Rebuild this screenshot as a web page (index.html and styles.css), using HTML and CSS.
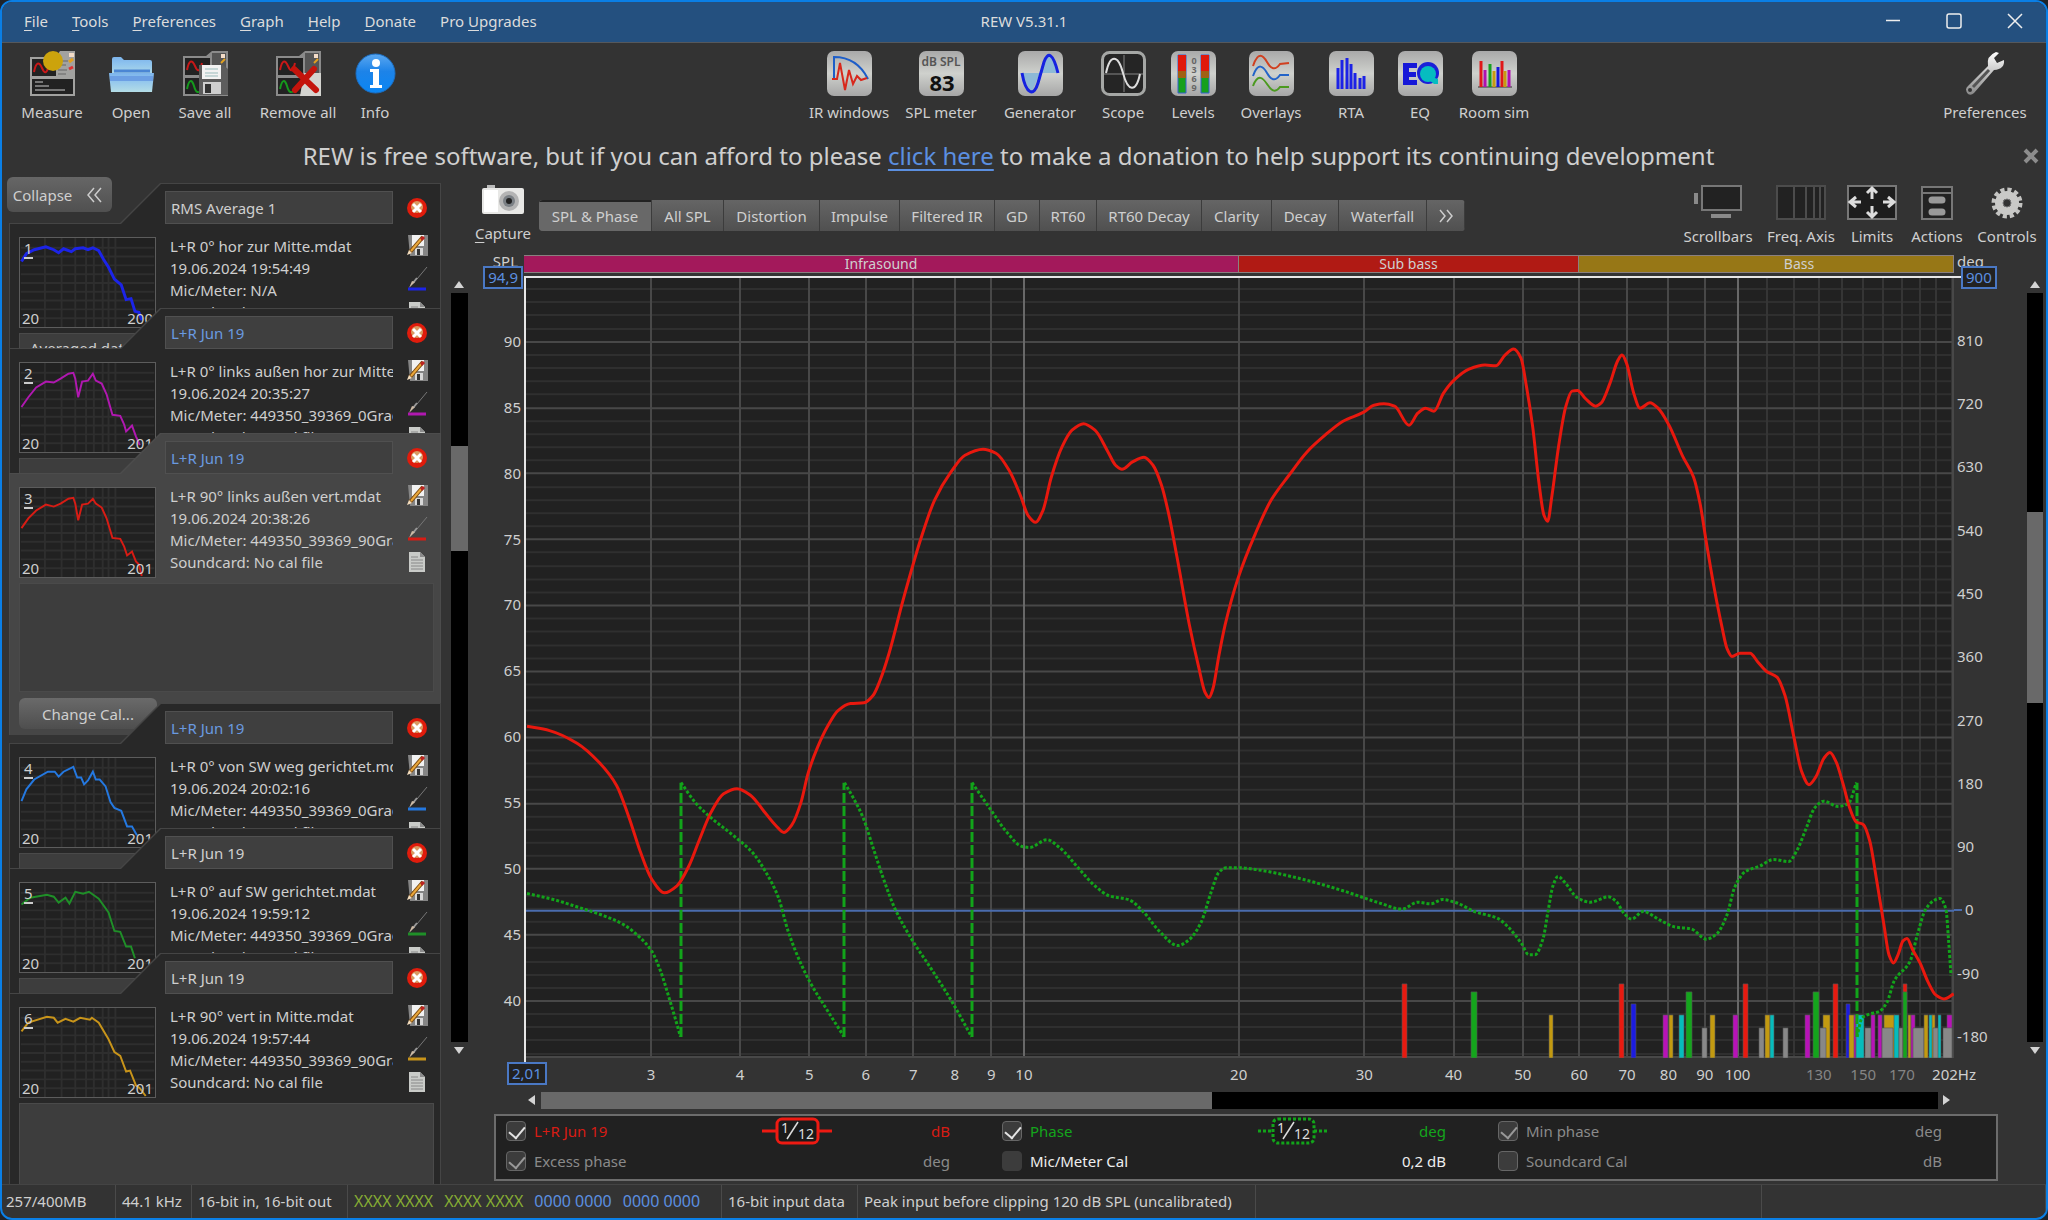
FILE: index.html
```html
<!DOCTYPE html>
<html lang="en">
<head>
<meta charset="utf-8">
<title>REW V5.31.1</title>
<link rel="stylesheet" href="styles.css">
</head>
<body>
<svg class="defs" aria-hidden="true">
  <defs>
    <linearGradient id="tile" x1="0" y1="0" x2="0" y2="1"><stop offset="0" stop-color="#a9a9a9"/><stop offset=".5" stop-color="#cfd1cd"/><stop offset="1" stop-color="#a6a6a6"/></linearGradient>
    <linearGradient id="metal" x1="0" y1="0" x2="0" y2="1"><stop offset="0" stop-color="#fff"/><stop offset="1" stop-color="#888"/></linearGradient>
    <linearGradient id="folder" x1="0" y1="0" x2="0" y2="1"><stop offset="0" stop-color="#7db4ec"/><stop offset=".35" stop-color="#8ec3ee"/><stop offset="1" stop-color="#b4dde6"/></linearGradient>
    <linearGradient id="blue" x1="0" y1="0" x2="0" y2="1"><stop offset="0" stop-color="#5aa7f0"/><stop offset=".45" stop-color="#1d83e8"/><stop offset="1" stop-color="#0a86f4"/></linearGradient>
    <symbol id="sheet" viewBox="0 0 45 45">
      <path d="M0 5H23L29 0H45V45H0Z" fill="#8b8b8b"/><path d="M2 7H27V24H2Z" fill="#222"/><path d="M2 27H27V43H2Z" fill="#222"/>
      <path d="M29 2H43V43H29Z" fill="#555"/><path d="M38 3h4v4h-4z" fill="#f3dcc8"/><path d="M38 12l4-4" stroke="#e0a020" stroke-width="2"/>
      <path d="M4 19C6 9 9 8 12 15S17 20 19 12" fill="none" stroke="#c81818" stroke-width="2"/>
      <path d="M4 38C6 28 9 28 11 35S15 42 18 40" fill="none" stroke="#159a1c" stroke-width="2"/>
    </symbol>
    <symbol id="delete" viewBox="0 0 22 22"><circle cx="11" cy="11" r="10" fill="#e01c0c"/><circle cx="11" cy="10" r="6" fill="#d99a62"/><path d="M7 7L15 15M15 7L7 15" stroke="#fff" stroke-width="3" fill="none"/></symbol>
    <symbol id="floppy" viewBox="0 0 21 21"><path d="M1 0H21V21H3Z" fill="#858585"/><path d="M5 0H17V11H5Z" fill="#f2f2f2"/><path d="M8 13H16V20H8Z" fill="#d8d8d8"/><path d="M10 14h3v6h-3z" fill="#333"/><path d="M16 2L3 17" stroke="#7a4a10" stroke-width="4"/><path d="M15 3L4 16" stroke="#e9a63a" stroke-width="2"/><path d="M0 20L2 15L5 18Z" fill="#f4ddbd"/><path d="M13 3L16 1L18 3L15 6Z" fill="#b22"/></symbol>
    <symbol id="brush" viewBox="0 0 21 25"><path d="M20 1L10 13" stroke="#777" stroke-width="1"/><path d="M10 12L6 17" stroke="#999" stroke-width="2"/><path d="M8 16L2 22L5 15Z" fill="#cbb9a5"/><path d="M1 23H19" stroke="currentColor" stroke-width="3"/></symbol>
    <symbol id="doc" viewBox="0 0 21 21"><path d="M2 1H13L18 6V21H2Z" fill="#c9cbc8"/><path d="M13 1V6H18Z" fill="#8b8b8b"/><path d="M4 6H11M4 9H16M4 12H16M4 15H16M4 18H16" stroke="#888" stroke-width="1"/></symbol>
    <symbol id="thumbgrid" viewBox="0 0 137 91"><path d="M25 0V91M42 0V91M56 0V91M67 0V91M75 0V91M84 0V91M90 0V91M97 0V91M0 10H137M0 19H137M0 28H137M0 37H137M0 46H137M0 55H137M0 64H137M0 73H137M0 82H137" stroke="#2e2e2e" stroke-width="2" fill="none"/></symbol>
  </defs>
</svg>

<div class="window">
  <header class="titlebar">
    <nav class="menu">
      <a href="#"><u>F</u>ile</a><a href="#"><u>T</u>ools</a><a href="#"><u>P</u>references</a><a href="#"><u>G</u>raph</a><a href="#"><u>H</u>elp</a><a href="#"><u>D</u>onate</a><a href="#">Pro <u>U</u>pgrades</a>
    </nav>
    <h1 class="app-title">REW V5.31.1</h1>
    <div class="win-buttons">
      <button aria-label="Minimise"><svg width="16" height="16"><path d="M1 7.500H15" stroke="#eee" stroke-width="1.500"/></svg></button>
      <button aria-label="Maximise"><svg width="16" height="16"><rect x="1" y="1" width="14" height="14" rx="2" fill="none" stroke="#eee" stroke-width="1.500"/></svg></button>
      <button aria-label="Close"><svg width="16" height="16"><path d="M1 1L15 15M15 1L1 15" stroke="#eee" stroke-width="1.500"/></svg></button>
    </div>
  </header>

  <div class="toolbar">
    <div class="tools tools-file">
      <button><svg width="45" height="45"><path d="M0 6H26L30 0H45V45H0Z" fill="#a2a2a0"/><path d="M2 8H26V25H2Z" fill="#222"/><path d="M2 28H43V43H2Z" fill="#222"/><path d="M4 21C6 11 9 10 12 17S17 22 19 14" fill="none" stroke="#c81818" stroke-width="2"/><path d="M5 31h8M5 35h14M5 39h30" stroke="#ccc" stroke-width="1"/><path d="M28 10H38M28 14H36M28 19H37M28 23H36" stroke="#666" stroke-width="1"/><path d="M39 2h5v4h-5z" fill="#f3dcc8"/><path d="M39 11l4-3" stroke="#e0a020" stroke-width="3"/><path d="M39 18l4-2" stroke="#d33" stroke-width="3"/><circle cx="23" cy="10" r="10" fill="#cca30c"/></svg>Measure</button>
      <button><svg width="45" height="45"><path d="M3 8Q3 6 5 6H12L15 9H41Q43 9 43 11V25H3Z" fill="url(#folder)"/><path d="M5 20H41" stroke="#4b86d4" stroke-width="3"/><path d="M0 22H45L43 41H2Z" fill="url(#folder)"/><path d="M1 25H44L44 30H1Z" fill="#6c9fe4"/></svg>Open</button>
      <button><svg width="45" height="45"><use href="#sheet"/><path d="M16 14H40L45 18V44H16Z" fill="#5d5d5d"/><path d="M19 14H38V28H19Z" fill="#f2f2f2"/><path d="M22 18H35M22 22H35M22 25H35" stroke="#9bb"/><path d="M20 31H38V43H20Z" fill="#cfcfcf"/><path d="M22 33h6v9h-6z" fill="#333"/></svg>Save all</button>
      <button><svg width="45" height="45"><use href="#sheet"/><path d="M28 22H45V45H24Z" fill="#d4d4d0"/><path d="M18 18L40 39M38 18L19 39" stroke="#c4140c" stroke-width="6" stroke-linecap="round"/></svg>Remove all</button>
      <button><svg width="45" height="45"><circle cx="22.500" cy="22.500" r="19.500" fill="url(#blue)" stroke="#1b6fc4"/><circle cx="23" cy="12" r="4" fill="#fff"/><path d="M17 18H26V34H29V37H17V34H20V21H17Z" fill="#fff"/></svg>Info</button>
    </div>
    <div class="tools tools-main">
      <button><svg width="45" height="45"><rect width="45" height="45" rx="7" fill="url(#tile)"/><path d="M7 28V6C22 6 34 14 41 28" fill="none" stroke="#1e5ec8" stroke-width="2"/><path d="M5 28H10L13 12L18 39L22 19L26 33L30 25L34 29L40 27" fill="none" stroke="#d8281c" stroke-width="2"/></svg>IR windows</button>
      <button><svg width="45" height="45"><rect width="45" height="45" rx="7" fill="url(#tile)"/><text x="22" y="15" class="icon-small">dB SPL</text><text x="23" y="40" class="icon-big">83</text></svg>SPL meter</button>
      <button><svg width="45" height="45"><rect width="45" height="45" rx="7" fill="url(#tile)"/><path d="M4 22H22L14 40Q10 38 4 22ZM23 22H40L32 4Q28 4 23 22Z" fill="#8db9d6"/><path d="M4 22C8 44 16 46 20 32L26 11C30 0 35 2 40 22" fill="none" stroke="#1522e0" stroke-width="3"/></svg>Generator</button>
      <button><svg width="45" height="45"><rect x="1.500" y="1.500" width="42" height="42" rx="7" fill="#252525" stroke="#a5a7a5" stroke-width="3"/><path d="M3 23H42M23 4V41" stroke="#555" stroke-width="2"/><path d="M5 22C9 3 17 3 22 22S35 42 39 23" fill="none" stroke="#ddd" stroke-width="2"/></svg>Scope</button>
      <button><svg width="45" height="45"><rect width="45" height="45" rx="7" fill="url(#tile)"/><g stroke="#3460d0"><path d="M7 4H15V42H7ZM30 4H38V42H30Z" fill="#16a01c"/></g><path d="M7 4H15V20H7ZM30 4H38V20H30Z" fill="#e0180c"/><path d="M7 20H15V27H7ZM30 20H38V27H30Z" fill="#a06014"/><g class="icon-scale"><text x="23" y="13">0</text><text x="23" y="22">3</text><text x="23" y="31">6</text><text x="23" y="40">9</text></g></svg>Levels</button>
      <button><svg width="45" height="45"><rect width="45" height="45" rx="7" fill="url(#tile)"/><g fill="none" stroke-width="2"><path d="M4 15C9 0 14 4 18 11S26 20 31 13T40 12" stroke="#d04020"/><path d="M4 25C9 11 14 15 18 22S26 31 31 24T40 24" stroke="#2464c8"/><path d="M4 35C9 22 14 27 18 33S26 43 31 36T40 36" stroke="#4c9a20"/></g></svg>Overlays</button>
      <button><svg width="45" height="45"><rect width="45" height="45" rx="7" fill="url(#tile)"/><path d="M9 38V17M13 38V9M18 38V7M22 38V13M26 38V22M31 38V27M35 38V25" stroke="#1c22e6" stroke-width="3"/></svg>RTA</button>
      <button><svg width="45" height="45"><rect width="45" height="45" rx="7" fill="url(#tile)"/><path d="M5 12H19V17H11V21H18V26H11V29H19V34H5Z" fill="#1618d8"/><circle cx="30" cy="22" r="11" fill="#1a20d8"/><circle cx="30" cy="23" r="8" fill="#06bcc0"/><path d="M34 26L40 28V33H36L31 29Z" fill="#06bcc0"/></svg>EQ</button>
      <button><svg width="45" height="45"><rect width="45" height="45" rx="7" fill="url(#tile)"/><path d="M6 36H40" stroke="#333"/><g stroke-width="3"><path d="M9 36V10M30 36V10" stroke="#e01818"/><path d="M13 36V19M37 36V19" stroke="#b010b0"/><path d="M18 36V13" stroke="#18a020"/><path d="M22 36V20M33 36V20" stroke="#c89a10"/><path d="M26 36V16" stroke="#1818d8"/></g></svg>Room sim</button>
    </div>
    <div class="tools tools-prefs">
      <button><svg width="45" height="45"><path d="M5 43Q1 38 5 35L25 15Q23 5 33 1L36 2L31 7L34 12L41 9Q42 18 31 19L11 42Q8 45 5 43Z" fill="url(#metal)"/><path d="M10 36L26 19" stroke="#555" stroke-width="3"/><circle cx="7" cy="39" r="2" fill="#333"/></svg>Preferences</button>
    </div>
  </div>

  <div class="banner">
    <p>REW is free software, but if you can afford to please <a href="#">click here</a> to make a donation to help support its continuing development</p>
    <button class="banner-close" aria-label="Close message"><svg width="16" height="16"><path d="M2 2L14 14M14 2L2 14" stroke="#8c8c8c" stroke-width="4"/></svg></button>
  </div>

  <main class="workspace">
    <aside class="sidebar">
      <button class="collapse">Collapse <svg width="16" height="16"><path d="M8 1L2 8L8 15M15 1L9 8L15 15" fill="none" stroke="#ccc" stroke-width="1.500"/></svg></button>

      <article class="card">
        <input class="name plain" aria-label="Measurement 1 name" value="RMS Average 1"><button class="icon-btn" aria-label="Remove 1"><svg width="22" height="22"><use href="#delete"/></svg></button>
        <div class="thumb"><svg viewBox="0 0 137 91"><use href="#thumbgrid"/><polyline class="trace blue wide" points="1,24 6,16 14,12 26,9 34,12 39,15 44,11 52,14 56,11 64,10 69,12 74,10 80,13 85,22 90,30 96,42 103,48 108,63 113,62 117,75 121,76 124,84"/></svg><b>1</b><i>20</i><em>200</em></div>
        <div class="info"><p>L+R 0° hor zur Mitte.mdat</p><p>19.06.2024 19:54:49</p><p>Mic/Meter: N/A</p><p>Soundcard: N/A</p></div>
        <div class="card-icons blue"><svg width="21" height="21"><use href="#floppy"/></svg><svg width="21" height="25"><use href="#brush"/></svg><svg width="21" height="21"><use href="#doc"/></svg></div>
        <textarea class="notes" aria-label="Notes 1">Averaged data</textarea>
      </article>

      <article class="card">
        <input class="name" aria-label="Measurement 2 name" value="L+R Jun 19"><button class="icon-btn" aria-label="Remove 2"><svg width="22" height="22"><use href="#delete"/></svg></button>
        <div class="thumb"><svg viewBox="0 0 137 91"><use href="#thumbgrid"/><polyline class="trace magenta" points="1,45 8,35 16,25 26,19 34,20 41,16 49,11 54,10 56,16 59,35 63,19 69,18 74,11 77,18 83,21 88,32 94,53 102,54 106,63 108,70 114,64 118,75 122,84"/></svg><b>2</b><i>20</i><em>201</em></div>
        <div class="info"><p>L+R 0° links außen hor zur Mitte.mdat</p><p>19.06.2024 20:35:27</p><p>Mic/Meter: 449350_39369_0Grad.txt</p><p>Soundcard: No cal file</p></div>
        <div class="card-icons magenta"><svg width="21" height="21"><use href="#floppy"/></svg><svg width="21" height="25"><use href="#brush"/></svg><svg width="21" height="21"><use href="#doc"/></svg></div>
        <textarea class="notes" aria-label="Notes 2"></textarea>
      </article>

      <article class="card active">
        <input class="name" aria-label="Measurement 3 name" value="L+R Jun 19"><button class="icon-btn" aria-label="Remove 3"><svg width="22" height="22"><use href="#delete"/></svg></button>
        <div class="thumb"><svg viewBox="0 0 137 91"><use href="#thumbgrid"/><polyline class="trace red" points="1,41 8,31 16,23 26,17 34,19 41,16 49,11 54,10 56,16 59,33 63,17 69,16 74,11 77,16 83,20 88,31 94,51 102,52 106,60 109,69 114,65 118,75 121,78 124,90"/></svg><b>3</b><i>20</i><em>201</em></div>
        <div class="info"><p>L+R 90° links außen vert.mdat</p><p>19.06.2024 20:38:26</p><p>Mic/Meter: 449350_39369_90Grad.txt</p><p>Soundcard: No cal file</p></div>
        <div class="card-icons red"><svg width="21" height="21"><use href="#floppy"/></svg><svg width="21" height="25"><use href="#brush"/></svg><svg width="21" height="21"><use href="#doc"/></svg></div>
        <textarea class="notes" aria-label="Notes 3"></textarea>
        <button class="change-cal">Change Cal...</button>
      </article>

      <article class="card">
        <input class="name" aria-label="Measurement 4 name" value="L+R Jun 19"><button class="icon-btn" aria-label="Remove 4"><svg width="22" height="22"><use href="#delete"/></svg></button>
        <div class="thumb"><svg viewBox="0 0 137 91"><use href="#thumbgrid"/><polyline class="trace azure" points="1,44 6,32 14,22 28,14 35,14 39,19 44,14 54,9 58,20 62,20 65,27 69,23 74,14 77,22 81,22 87,29 92,45 96,51 103,54 109,70 114,70 119,79"/></svg><b>4</b><i>20</i><em>201</em></div>
        <div class="info"><p>L+R 0° von SW weg gerichtet.mdat</p><p>19.06.2024 20:02:16</p><p>Mic/Meter: 449350_39369_0Grad.txt</p><p>Soundcard: No cal file</p></div>
        <div class="card-icons azure"><svg width="21" height="21"><use href="#floppy"/></svg><svg width="21" height="25"><use href="#brush"/></svg><svg width="21" height="21"><use href="#doc"/></svg></div>
        <textarea class="notes" aria-label="Notes 4"></textarea>
      </article>

      <article class="card">
        <input class="name plain" aria-label="Measurement 5 name" value="L+R Jun 19"><button class="icon-btn" aria-label="Remove 5"><svg width="22" height="22"><use href="#delete"/></svg></button>
        <div class="thumb"><svg viewBox="0 0 137 91"><use href="#thumbgrid"/><polyline class="trace green" points="1,22 10,15 27,12 34,14 39,20 46,15 50,21 56,9 64,11 70,9 80,16 90,30 96,49 102,50 108,65 113,65 117,77"/></svg><b>5</b><i>20</i><em>201</em></div>
        <div class="info"><p>L+R 0° auf SW gerichtet.mdat</p><p>19.06.2024 19:59:12</p><p>Mic/Meter: 449350_39369_0Grad.txt</p><p>Soundcard: No cal file</p></div>
        <div class="card-icons green"><svg width="21" height="21"><use href="#floppy"/></svg><svg width="21" height="25"><use href="#brush"/></svg><svg width="21" height="21"><use href="#doc"/></svg></div>
        <textarea class="notes" aria-label="Notes 5"></textarea>
      </article>

      <article class="card last">
        <input class="name plain" aria-label="Measurement 6 name" value="L+R Jun 19"><button class="icon-btn" aria-label="Remove 6"><svg width="22" height="22"><use href="#delete"/></svg></button>
        <div class="thumb"><svg viewBox="0 0 137 91"><use href="#thumbgrid"/><polyline class="trace amber" points="1,24 8,15 27,9 34,10 38,15 46,11 54,14 61,10 71,12 73,10 80,15 90,32 96,45 102,49 108,65 112,64 118,79 122,82 128,90"/></svg><b>6</b><i>20</i><em>201</em></div>
        <div class="info"><p>L+R 90° vert in Mitte.mdat</p><p>19.06.2024 19:57:44</p><p>Mic/Meter: 449350_39369_90Grad.txt</p><p>Soundcard: No cal file</p></div>
        <div class="card-icons amber"><svg width="21" height="21"><use href="#floppy"/></svg><svg width="21" height="25"><use href="#brush"/></svg><svg width="21" height="21"><use href="#doc"/></svg></div>
        <textarea class="notes" aria-label="Notes 6"></textarea>
      </article>
    </aside>

    <div class="scroll scroll-v scroll-list"><span class="arrow up"></span><div class="track"><div class="grip grip-list"></div></div><span class="arrow down"></span></div>

    <section class="graph">
      <div class="graph-head">
        <button class="capture"><svg width="42" height="30"><path d="M5 0H13V3H5Z" fill="#bbb"/><rect x="0" y="3" width="42" height="26" rx="2" fill="#e8e8e6"/><path d="M2 5H16V27H2Z" fill="#fff"/><circle cx="27" cy="16" r="10" fill="#b4b4b4"/><circle cx="27" cy="16" r="6" fill="#7b8085"/><circle cx="27" cy="16" r="3" fill="#222"/></svg><span><u>C</u>apture</span></button>
        <nav class="tabs">
          <button class="on">SPL &amp; Phase</button><button>All SPL</button><button>Distortion</button><button>Impulse</button><button>Filtered IR</button><button>GD</button><button>RT60</button><button>RT60 Decay</button><button>Clarity</button><button>Decay</button><button>Waterfall</button><button aria-label="More graphs"><svg width="16" height="14"><path d="M2 1L7 7L2 13M9 1L14 7L9 13" fill="none" stroke="#ccc" stroke-width="1.500"/></svg></button>
        </nav>
        <div class="view-tools">
          <button><svg width="50" height="35"><path d="M1 8H5V19H1Z M18 29H38V33H18Z" fill="#8a8a8a"/><rect x="9" y="1" width="39" height="24" fill="#222" stroke="#777" stroke-width="2"/></svg>Scrollbars</button>
          <button><svg width="50" height="35"><rect x="1" y="1" width="48" height="33" fill="#222" stroke="#4c4c4c" stroke-width="2"/><path d="M18 1V34M30 1V34M38 1V34M44 1V34" stroke="#4c4c4c" stroke-width="2"/></svg>Freq. Axis</button>
          <button><svg width="50" height="35"><rect x="1" y="1" width="48" height="33" fill="#1d1d1d" stroke="#777" stroke-width="2"/><path d="M25 14V4M20 8L25 3L30 8M25 21V31M20 27L25 32L30 27M14 17H3M9 12L3 17L9 22M36 17H47M41 12L47 17L41 22" fill="none" stroke="#ddd" stroke-width="3"/></svg>Limits</button>
          <button><svg width="50" height="35"><path d="M10 2H40V34H10Z M10 8H40" fill="#222" stroke="#777" stroke-width="2"/><path d="M20 15H30M20 27H30" stroke="#999" stroke-width="7" stroke-linecap="round"/></svg>Actions</button>
          <button><svg width="50" height="35"><circle cx="25" cy="18" r="13" fill="none" stroke="#c4c4c2" stroke-width="5" stroke-dasharray="4 2.800"/><circle cx="25" cy="18" r="8" fill="none" stroke="#c9c9c7" stroke-width="8"/><circle cx="25" cy="18" r="4" fill="#333" stroke="#777"/></svg>Controls</button>
        </div>
      </div>

      <div class="bands"><span class="infra">Infrasound</span><span class="sub">Sub bass</span><span class="bass">Bass</span></div>
      <div class="axis axis-spl" id="axis-spl"><span class="unit">SPL</span><output class="limit">94,9</output></div>
      <div class="plot"><svg id="plot" viewBox="526 278 1428 779" preserveAspectRatio="none"></svg></div>
      <div class="axis axis-deg" id="axis-deg"><span class="unit">deg</span><output class="limit">900</output></div>
      <div class="scroll scroll-v scroll-plot"><span class="arrow up"></span><div class="track"><div class="grip grip-plot"></div></div><span class="arrow down"></span></div>
      <div class="axis axis-freq" id="axis-freq"><output class="limit">2,01</output></div>
      <div class="scroll scroll-h"><span class="arrow left"></span><div class="track"><div class="grip grip-freq"></div></div><span class="arrow right"></span></div>

      <div class="legend">
        <div class="entry c-red"><input type="checkbox" id="t1" checked><label for="t1">L+R Jun 19</label><svg width="70" height="28"><path d="M0 14H14M56 14H70" stroke="#ee1a12" stroke-width="3"/><rect x="15" y="2" width="41" height="24" rx="5" fill="#1a1a1a" stroke="#ee1a12" stroke-width="3"/><path d="M25 22L36 5" stroke="#ddd" stroke-width="1.500"/><text x="19" y="16">1</text><text x="36" y="22">12</text></svg><span class="u">dB</span></div>
        <div class="entry c-green"><input type="checkbox" id="t2" checked><label for="t2">Phase</label><svg width="70" height="28"><g stroke="#12a41a" stroke-width="3" stroke-dasharray="3 2"><path d="M0 14H14M56 14H70"/><rect x="15" y="2" width="41" height="24" rx="5" fill="#1a1a1a"/></g><path d="M25 22L36 5" stroke="#ddd" stroke-width="1.500"/><text x="19" y="16">1</text><text x="36" y="22">12</text></svg><span class="u">deg</span></div>
        <div class="entry"><input type="checkbox" id="t3" checked disabled><label for="t3">Min phase</label><span class="u">deg</span></div>
        <div class="entry"><input type="checkbox" id="t4" checked disabled><label for="t4">Excess phase</label><span class="u">deg</span></div>
        <div class="entry c-white"><input type="checkbox" id="t5"><label for="t5">Mic/Meter Cal</label><span class="u">0,2 dB</span></div>
        <div class="entry"><input type="checkbox" id="t6" disabled><label for="t6">Soundcard Cal</label><span class="u">dB</span></div>
      </div>
    </section>
  </main>

  <footer class="status">
    <span class="s-mem">257/400MB</span><span class="s-rate">44.1 kHz</span><span class="s-bits">16-bit in, 16-bit out</span>
    <span class="s-flags"><b>XXXX XXXX</b><b>XXXX XXXX</b><i>0000 0000</i><i>0000 0000</i></span>
    <span class="s-in">16-bit input data</span><span class="s-peak">Peak input before clipping 120 dB SPL (uncalibrated)</span><span class="s-fill"></span><span class="s-end"></span>
  </footer>
</div>
<script src="chart.js"></script>
</body>
</html>
```
FILE: styles.css
```css
* { box-sizing: border-box; }
body { margin: 0; background: #20242a; color: #cfcfcf; font: 15px/20px "Noto Sans", "Open Sans", sans-serif; }
button, input, textarea { font: inherit; color: inherit; margin: 0; padding: 0; border: 0; background: none; }
button { display: flex; align-items: center; justify-content: center; white-space: nowrap; }
p, h1 { margin: 0; }
svg { display: block; flex: none; }
u { text-underline-offset: 3px; }
.defs { position: absolute; width: 0; height: 0; }

.window { display: flex; flex-direction: column; height: 100vh; min-height: 900px; border: 2px solid #0a7fe6; border-radius: 12px; background: #333; overflow: hidden; }

.titlebar { display: grid; grid-template-columns: 1fr auto 1fr; align-items: center; height: 41px; flex: none; padding-bottom: 2px; background: #24507f; border-bottom: 1px solid #55585c; }
.menu { display: flex; gap: 24px; padding-left: 22px; }
.menu a { color: #dcdcdc; text-decoration: none; }
.app-title { font-size: 15px; line-height: 20px; font-weight: 400; color: #dcdcdc; }
.win-buttons { display: flex; justify-content: flex-end; gap: 45px; padding-right: 23px; }

.toolbar { display: flex; justify-content: space-between; height: 94px; flex: none; padding: 8px 11px 0 13px; }
.tools { display: grid; align-items: start; }
.tools button { flex-direction: column; gap: 6px; }
.tools-file { grid-template-columns: 74px 84px 64px 122px 32px; padding-right: 18px; }
.tools-main { grid-template-columns: 90px 94px 104px 62px 78px 78px 82px 56px 92px; }
.tools-prefs { grid-template-columns: 100px; }
.icon-small { font-size: 12px; font-weight: 600; text-anchor: middle; fill: #555; }
.icon-big { font-size: 22px; font-weight: 700; text-anchor: middle; fill: #111; }
.icon-scale { font-size: 9px; font-weight: 700; text-anchor: middle; fill: #666; }

.banner { display: flex; align-items: center; height: 37px; flex: none; padding: 0 7px 0 36px; }
.banner p { flex: 1; text-align: center; font-size: 24px; line-height: 36px; padding-right: 44px; }
.banner a { color: #5b8fe0; text-underline-offset: 4px; text-decoration-thickness: 2px; }

.workspace { display: grid; grid-template-columns: 449px 17px minmax(0, 1fr); flex: 1; min-height: 0; }

.sidebar { position: relative; padding: 9px 10px 0 7px; overflow: hidden; }
.collapse { position: absolute; left: 5px; top: 3px; z-index: 2; width: 105px; height: 35px; gap: 14px; padding-right: 4px; border-radius: 6px; background: linear-gradient(#666, #505050); }
.card { position: relative; isolation: isolate; display: grid; grid-template-columns: 137px 228px 26px; grid-template-rows: 33px 95px auto; column-gap: 9px; row-gap: 11px; align-content: start; height: 165px; margin-bottom: -40px; padding: 8px 13px 0 10px; overflow: hidden; --face: #282828; }
.card::before, .card::after { content: ""; position: absolute; inset: 0; z-index: -1; background: #454545; clip-path: polygon(0 40px, 111px 40px, 151px 0, 100% 0, 100% 100%, 0 100%); }
.card::after { inset: 1px 1px 0; background: var(--face); }
.card.active { --face: #464646; height: 302px; margin-bottom: -32px; }
.card.active::before { background: #4c4c4c; }
.card.last { height: 300px; margin-bottom: 0; }
.name { grid-column: 2; padding: 0 5px; border: 1px solid #505050; background: #3f3f3f; color: #6a9ae0; }
.name.plain { color: #cfcfcf; }
.icon-btn { justify-content: flex-end; }
.thumb { position: relative; grid-column: 1; height: 91px; margin-top: 2px; border: 1px solid #5c5c5c; background: #212121; }
.thumb svg { width: 100%; height: 100%; }
.thumb b, .thumb i, .thumb em { position: absolute; font-style: normal; font-weight: 400; line-height: 18px; }
.thumb b { left: 4px; top: 2px; border-bottom: 2px solid #ccc; line-height: 17px; }
.thumb i { left: 2px; bottom: 0; }
.thumb em { right: 2px; bottom: 0; }
.trace { fill: none; stroke: currentColor; stroke-width: 2; }
.trace.wide { stroke-width: 3; }
.blue { color: #1c24e8; }
.magenta { color: #b018b0; }
.red { color: #d81c14; }
.azure { color: #2478e0; }
.green { color: #1f8f28; }
.amber { color: #c8941a; }
.info { grid-column: 2; padding-left: 5px; overflow: hidden; white-space: nowrap; }
.info p { line-height: 22px; }
.card-icons { display: flex; flex-direction: column; align-items: flex-end; gap: 10px; }
.notes { grid-column: 1 / -1; width: 415px; height: 109px; margin-top: -8px; padding: 4px 10px; border: 1px solid #4a4a4a; background: #3d3d3d; resize: none; overflow: hidden; }
.change-cal { width: 138px; height: 31px; margin-top: -5px; border-radius: 6px; background: linear-gradient(#6a6a6a, #4e4e4e); }

.scroll { display: flex; }
.scroll-v { flex-direction: column; }
.track { flex: 1; background: #000; }
.grip { background: #696969; }
.scroll-v .track { display: flex; flex-direction: column; }
.arrow { flex: none; width: 16px; height: 16px; background: #d4d4d4; clip-path: polygon(3px 12px, 8px 5px, 13px 12px); }
.arrow.down { clip-path: polygon(3px 5px, 8px 12px, 13px 5px); }
.arrow.left { clip-path: polygon(11px 3px, 4px 8px, 11px 13px); }
.arrow.right { clip-path: polygon(5px 3px, 12px 8px, 5px 13px); }
.up { margin-bottom: 1px; }
.left { margin-right: 1px; }
.scroll-list { margin: 102px 0 126px; }
.grip-list { margin-top: 153px; height: 14%; }
.grip-plot { margin-top: 219px; height: 191px; }
.grip-freq { width: 48%; height: 100%; }

.graph { display: grid; grid-template-columns: 56px minmax(0, 1fr) 73px 16px 3px; grid-template-rows: 81px 18px 3px minmax(0, 1fr) 34px 17px 5px 67px 3px; }
.graph-head { grid-column: 1 / -1; display: flex; align-items: flex-start; padding: 11px 4px 0 2px; }
.capture { flex-direction: column; gap: 8px; width: 66px; }
.tabs { display: grid; grid-template-columns: 113px 72px 96px 80px 95px 45px 57px 105px 70px 67px 88px 38px; height: 31px; margin: 15px auto 0 3px; border-radius: 4px; overflow: hidden; background: #5a5a5a; }
.tabs button { border-right: 1px solid #3c3c3c; background: linear-gradient(#656565, #505050); }
.tabs .on { background: #686868; box-shadow: inset 0 2px #222; }
.view-tools { display: grid; grid-template-columns: 84px 82px 60px 70px 70px; }
.view-tools button { flex-direction: column; gap: 6px; }

.bands { grid-area: 2 / 2; display: grid; grid-template-columns: 715fr 340fr 375fr; line-height: 16px; font-size: 14px; text-align: center; }
.bands span { border: 1px solid #8a8080; border-left-width: 0; }
.infra { background: #a3195b; }
.sub { background: #b01a14; }
.bass { padding-left: 66px; background: #977716; }
.plot { grid-area: 4 / 2; position: relative; border: 2px solid #e6e6e6; border-width: 2px 0 0 2px; background: #212121; }
.plot::before { content: ""; position: absolute; left: 100%; top: -2px; width: 8px; height: 2px; background: #e6e6e6; }
.plot::after { content: ""; position: absolute; left: -2px; top: 100%; width: 2px; height: 5px; background: #e6e6e6; }
.plot svg { width: 100%; height: 100%; }
.plot svg * { vector-effect: non-scaling-stroke; }
.axis { position: relative; margin-top: 2px; }
.axis span, .limit { position: absolute; line-height: 18px; white-space: nowrap; }
.axis-spl { grid-area: 4 / 1; }
.axis-spl span { right: 3px; transform: translateY(-50%); }
.axis-deg { grid-area: 4 / 3; }
.axis-deg span { left: 3px; transform: translateY(-50%); }
.axis .unit { top: -17px; }
.axis-spl .unit { right: 6px; }
.axis-freq { grid-area: 5 / 2; margin: 0 0 0 2px; }
.axis-freq span { top: 7px; transform: translateX(-50%); }
.axis-freq .dim { color: #858585; }
.limit { height: 23px; padding: 0 3px; border: 2px solid #4a78c4; background: #222; color: #5b8fe0; }
.axis-spl .limit { right: 1px; top: -12px; }
.axis-deg .limit { left: 7px; top: -12px; }
.axis-freq .limit { left: -19px; top: 4px; }
.zero-mark { width: 8px; height: 2px; background: #4a6cae; }
.axis-deg .zero-mark { left: 0; }
.axis-deg .after-mark { left: 11px; }
.scroll-plot { grid-area: 4 / 4; }
.scroll-h { grid-area: 6 / 2; }

.legend { grid-area: 8 / 1 / 9 / -1; display: grid; grid-template-columns: repeat(3, 1fr); grid-auto-rows: 30px; margin: 0 48px 0 26px; padding-right: 12px; border: 2px solid #6c6c6c; background: #212121; }
.entry { display: flex; align-items: center; padding: 0 42px 0 10px; color: #8a8a8a; }
.entry label { flex: 1; padding-left: 8px; }
.entry text { font-size: 14px; fill: #ddd; }
.u { width: 118px; text-align: right; }
.entry.c-red { color: #d81c14; }
.entry.c-green { color: #14a51c; }
.entry.c-white { color: #eee; }
.entry svg { fill: none; }
.entry input { appearance: none; position: relative; width: 20px; height: 20px; border: 1px solid #666; border-radius: 4px; background: #3c3c3c; }
.entry input:checked::after { content: ""; position: absolute; left: 5px; top: 1px; width: 8px; height: 13px; border: solid #e4e4e4; border-width: 0 2px 2px 0; transform: rotate(40deg); }
.entry input:disabled::after { border-color: #999; }
.c-white input { border-color: #3c3c3c; }

.status { display: flex; flex: none; height: 34px; border-top: 1px solid #444; }
.status > span { display: flex; align-items: center; padding: 0 0 1px 6px; border-right: 1px solid #4a4a4a; white-space: nowrap; }
.s-mem { width: 114px; }
.status > .s-mem { padding-left: 4px; }
.s-rate { width: 76px; }
.s-bits { width: 156px; }
.s-flags { width: 374px; gap: 11px; font-size: 16px; }
.s-flags b { font-weight: 400; color: #86ac34; }
.s-flags i { font-style: normal; color: #5b8fe0; }
.s-in { width: 136px; }
.s-peak { width: 398px; }
.s-fill { flex: 1; }
.s-end { width: 284px; }
```
FILE: chart.js
```js
// SPL & Phase plot: log frequency axis, SPL in dB on the left, phase in degrees on the right.
const plot = document.getElementById('plot');
const box = { x: 526, y: 278, w: 1428, h: 779 };
const fx = f => 1024 + 713.5 * (Math.log10(f) - 1);
const dy = d => 341.7 + (90 - d) * 13.166;
const py = p => 909.5 - p * 0.702;
let out = '';
const line = (x1, y1, x2, y2, c, w) => { out += `<line x1="${Math.round(x1)}" y1="${Math.round(y1)}" x2="${Math.round(x2)}" y2="${Math.round(y2)}" stroke="${c}" stroke-width="${w}"/>`; };
const right = box.x + box.w, bottom = box.y + box.h;

for (let d = 36; d <= 94; d++) if (d % 5) line(box.x, dy(d), right, dy(d), '#2f2f2f', 2);
for (const f of [110, 120, 130, 140, 150, 160, 170, 180, 190, 200]) line(fx(f), box.y, fx(f), bottom, '#353535', 2);
for (let d = 40; d <= 90; d += 5) line(box.x, dy(d), right, dy(d), '#484848', 2);
for (const f of [3, 4, 5, 6, 7, 8, 9, 20, 30, 40, 50, 60, 70, 80, 90]) line(fx(f), box.y, fx(f), bottom, '#484848', 2);
for (const f of [10, 100]) line(fx(f), box.y, fx(f), bottom, '#686868', 2);
line(right - 1, box.y, right - 1, bottom, '#484848', 2);
line(box.x, bottom - 1, right, bottom - 1, '#484848', 2);
line(box.x, py(0), right, py(0), '#4a6cae', 2);

// Room mode markers: x, width, kind
const kinds = { r: ['#e81a10', 983], g: ['#14a51c', 991], b: ['#1c1ce0', 1003], y: ['#c39a10', 1014], m: ['#b812b8', 1014], c: ['#06bcbc', 1014], k: ['#888888', 1027] };
const modes = '876,5,r 945,6,g 1023,4,y 1093,5,r 1105,5,b 1137,5,m 1143,4,y 1153,5,c 1160,6,g 1176,5,k 1184,5,y 1207,5,m 1217,5,r 1233,5,k 1239,5,y 1244,4,c 1257,5,k 1279,5,m 1287,6,g 1297,7,y 1294,6,k 1307,5,r 1320,4,b 1323,6,y 1328,2,m 1330,8,c 1339,7,k 1345,4,m 1352,4,m 1358,11,y 1356,11,k 1368,5,c 1373,4,k 1377,4,r 1377,4,g 1382,3,y 1385,4,m 1387,11,k 1398,4,y 1403,4,c 1406,3,y 1407,6,k 1412,3,c 1421,5,m 1417,9,k';
for (const m of modes.split(' ')) {
  const [x, w, k] = m.split(',');
  const [c, top] = kinds[k];
  out += `<rect x="${+x + box.x}" y="${top}" width="${w}" height="${bottom - top}" fill="${c}" stroke="#555" stroke-opacity=".6"/>`;
}

// Smooth path through sampled points; tangents follow the local slope and flatten at peaks and dips
function curve(src) {
  const p = src.trim().split(/\s+/).map(s => s.split(',').map(Number));
  const n = p.length, s = [], t = [];
  for (let i = 0; i < n - 1; i++) s.push((p[i + 1][1] - p[i][1]) / (p[i + 1][0] - p[i][0]));
  for (let i = 0; i < n; i++) {
    if (i === 0) t.push(s[0]);
    else if (i === n - 1) t.push(s[n - 2]);
    else if (s[i - 1] * s[i] <= 0) t.push(0);
    else {
      const h0 = p[i][0] - p[i - 1][0], h1 = p[i + 1][0] - p[i][0];
      t.push(3 * (h0 + h1) / ((2 * h1 + h0) / s[i - 1] + (h1 + 2 * h0) / s[i]));
    }
  }
  let d = 'M' + p[0];
  for (let i = 0; i < n - 1; i++) {
    const h = (p[i + 1][0] - p[i][0]) / 3;
    d += `C${p[i][0] + h},${p[i][1] + h * t[i]} ${p[i + 1][0] - h},${p[i + 1][1] - h * t[i + 1]} ${p[i + 1]}`;
  }
  return d;
}

const phase = [
  '527,892.700 554.500,899 579,906.700 604,915 624,924 640,936.700 651.500,950 660.500,970 669,996.700 675,1016.700 680.500,1035.700',
  '681,782 696,802.700 711,817 733.600,835 753.500,853 766,871.700 778.400,896.700 788,930 801,963 811,983 825.600,1006.700 844,1035.700',
  '844.500,782 853,796.700 863,816.700 873,846.700 883,876.700 895,908 912.700,940 932.600,970 952.500,1001.700 971.500,1035.700',
  '972,782 990,808 1007,831.700 1022,845.700 1029.600,846.700 1047,839 1059.400,846.700 1079,868 1096.700,886.700 1109,895 1129,899 1144,911.700 1159,930 1178,944.700 1189,939 1201,921.700 1211,891.700 1218.600,872 1226,867 1240,867 1255.500,868.700 1296.700,877 1343,890 1379,902 1402,908.300 1417.800,901.400 1430.700,903 1442.500,898.700 1456.400,902 1474.500,910.700 1497.700,917.600 1508,926 1522,943.400 1528.600,953.800 1535,953.800 1543,938 1548,910.700 1553,885 1558,875.600 1564.600,881.400 1577.500,897 1590.400,901.400 1608.400,896 1616,900.400 1624,912.400 1631.600,918.300 1643,910.700 1660,919.300 1675.400,926.200 1691,928 1706.400,938.300 1716.700,933 1727,914 1734.700,886.600 1745,871 1760.500,865 1773.300,858.700 1788.800,860.800 1796.500,850.500 1806.800,826 1814.600,807.400 1823.800,800.500 1837.700,805.700 1848,803.300 1856.500,782',
  '1857,1036 1862,1017 1870,1013 1879,1010.600 1886.700,1002 1894.400,979.600 1910,960.600 1917.600,933 1925.400,909 1933,900.400 1939.800,897.600 1946,909 1948.500,938.300 1951,974.400'
];
for (const s of phase) out += `<path d="${curve(s)}" fill="none" stroke="#12a41a" stroke-width="3" stroke-dasharray="3 2"/>`;
for (const x of [681, 844, 972, 1857]) out += `<path d="M${x} 1036V782" stroke="#12a41a" stroke-width="3" stroke-dasharray="10 3"/>`;

const spl = `527,725.700 549.500,730 577,742.700 599,761.700 616.700,785 629,816.700 640,850 651.500,878 664.500,892 677,885 689,865 699,840 711,811.700 723.600,793 737,788 751,795 763.500,810 776,825 784,831.700 792,824 801,801.700 808,773 817,748 828,725 838,710 850.500,703 864,702.300 873,695 880,680 889,653 903,600 921,538 934.500,500 951,471.700 965,455 983,449 996,453 1010,471.700 1021,496.700 1028,515 1035.500,522 1043,510 1051,478 1062,446.700 1072,430 1083.500,423.500 1095,430 1108,451.700 1115.600,465 1122,469 1132.500,461.700 1144,457 1153,465 1161.500,485 1169,515 1177,556.700 1189.500,625 1198.700,666.700 1205,691.700 1209,697 1213,688 1218.600,656.700 1225,625 1238,578 1255.500,533 1271,500 1289,475 1307,451.700 1325,435 1343,421 1363.700,412 1374,405 1384,403.700 1394.600,406 1409,425 1417.800,413 1425.500,408 1434,411 1443.500,393 1454,380 1469,369 1485,365 1496,365.700 1505,355 1513.600,349 1521,358 1526.500,386.700 1532.700,426.700 1539,483 1544,515 1547.600,521 1552,495 1558.500,446.700 1565.700,406.700 1572,391 1577.500,390.300 1585,398 1595.600,406 1601,403 1610,383 1618,360 1622,355 1626.500,363 1633.700,393 1640,408 1650,402.700 1658,408 1669,425 1683,456.700 1693.500,476.700 1700,503 1706,540 1714,586.700 1722,626.700 1727,648 1732,656 1740,652.700 1750,652.700 1758,661.700 1766.600,671 1777,676.700 1785,695 1794,737 1801.700,771 1809,784 1816,776 1824,757.500 1830,752 1836,761 1843,783 1849.600,807 1856,821 1863.500,824 1869.700,840 1876.400,878 1884,924.500 1889,954 1893.400,962 1898,954 1903,940 1907,937.600 1912.500,948.600 1920,962 1928,981 1935.700,994 1944,998 1953.700,993`;
out += `<path d="${curve(spl)}" fill="none" stroke="#e8180e" stroke-width="3"/>`;
plot.innerHTML = out;

function label(axis, text, side, pos, cls) {
  const s = document.createElement('span');
  s.textContent = text;
  s.style[side] = pos.toFixed(2) + '%';
  if (cls) s.className = cls;
  document.getElementById(axis).append(s);
}
for (let d = 40; d <= 90; d += 5) label('axis-spl', d, 'top', (dy(d) - box.y - 1) / box.h * 100);
for (let p = -180; p <= 810; p += 90) label('axis-deg', p, 'top', (py(p) - box.y - 1) / box.h * 100, p ? '' : 'after-mark');
label('axis-deg', '', 'top', (py(0) - box.y) / box.h * 100, 'zero-mark');
for (const f of [3, 4, 5, 6, 7, 8, 9, 10, 20, 30, 40, 50, 60, 70, 80, 90, 100, 130, 150, 170]) label('axis-freq', f, 'left', (fx(f) - box.x) / box.w * 100, f > 100 ? 'dim' : '');
label('axis-freq', '202Hz', 'left', 100);
```
